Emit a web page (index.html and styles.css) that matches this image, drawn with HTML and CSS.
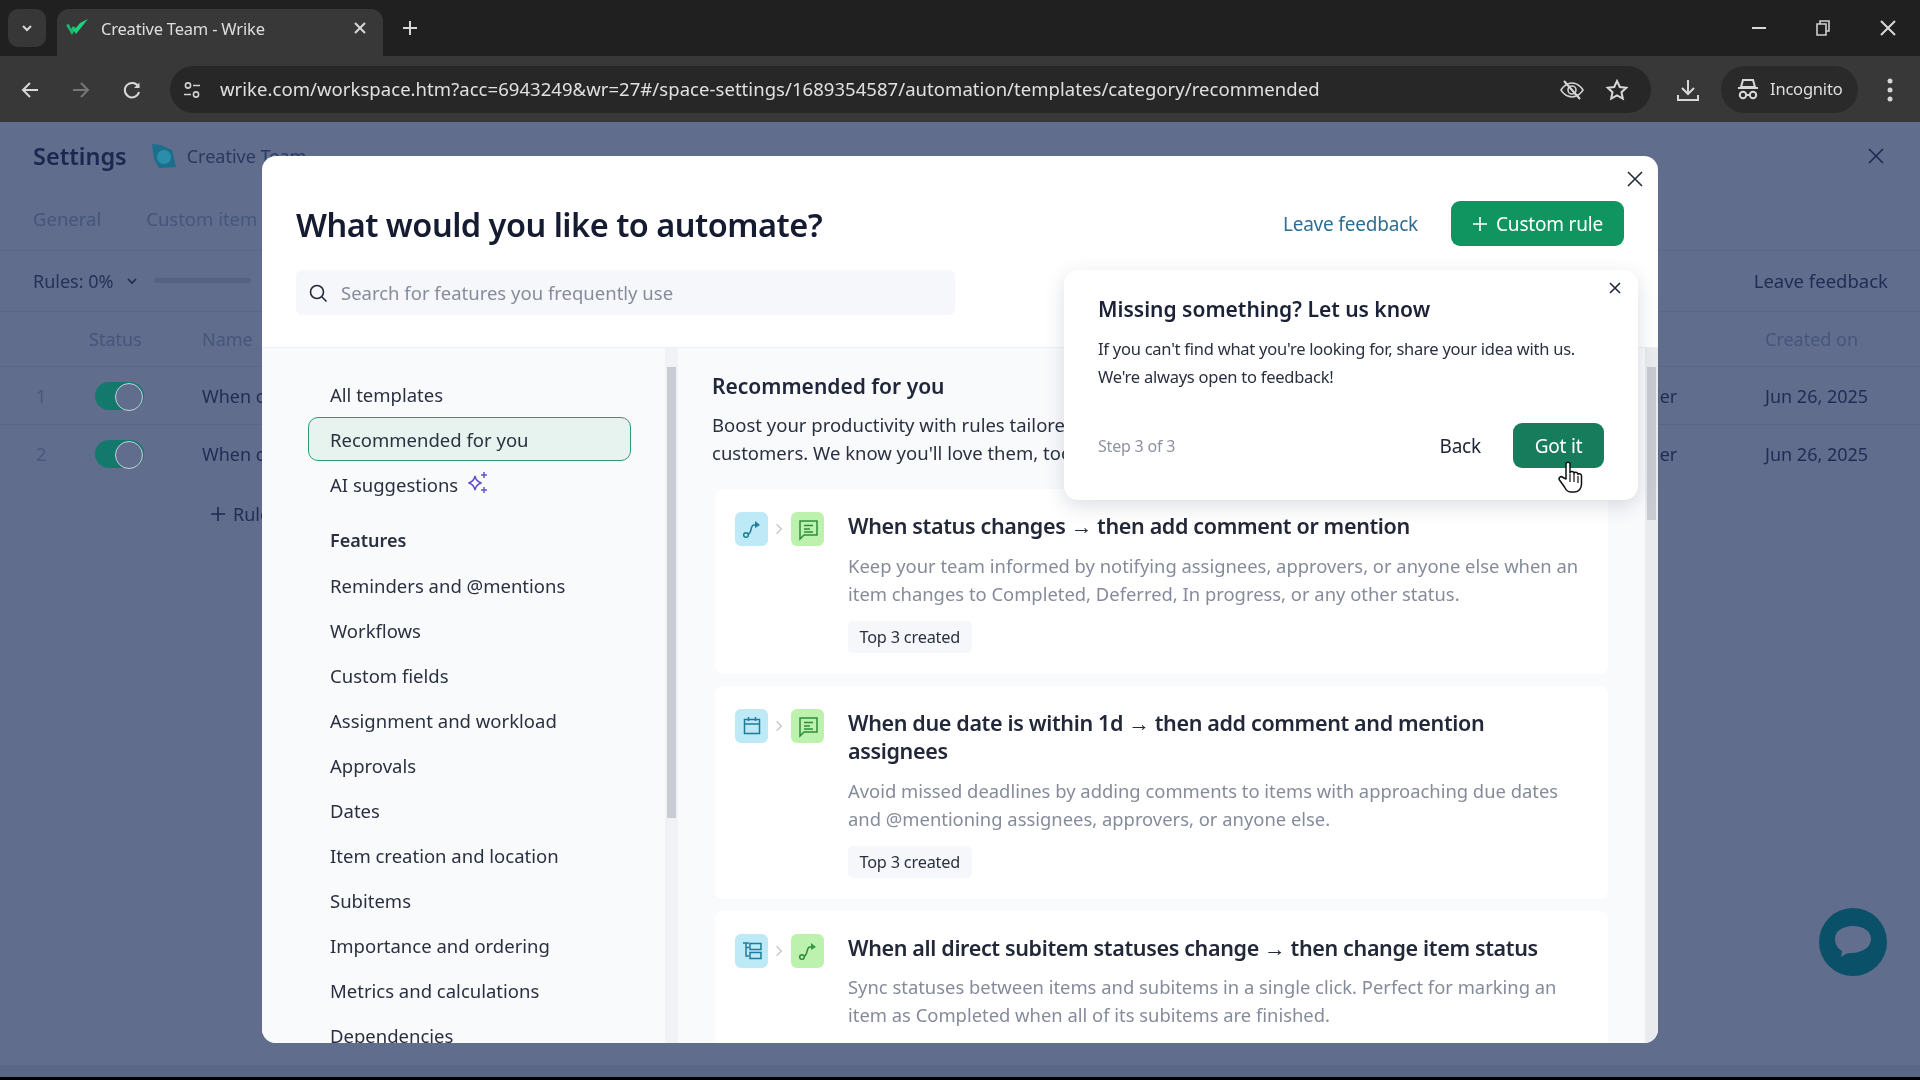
FILE: index.html
```html
<!DOCTYPE html>
<html lang="en">
<head>
<meta charset="utf-8">
<title>Creative Team - Wrike</title>
<link rel="stylesheet" href="styles.css">
</head>
<body>
<header class="tabstrip">
  <button class="tabs-menu"><svg width="14" height="14" viewBox="0 0 14 14"><path d="M3 5l4 4 4-4" class="ic-w2"/></svg></button>
  <div class="tab">
    <svg class="favicon" width="28" height="20" viewBox="0 0 28 20"><path d="M1 7l6 10 4-7-3-2-2 3-2-5z" fill="#19b96b"/><path d="M7 10l4 6 12-15-8 4-5 6z" fill="#1fd27c"/></svg>
    <span class="tab-title">Creative Team - Wrike</span>
    <svg class="tab-close" width="14" height="14" viewBox="0 0 14 14"><path d="M2 2l10 10M12 2L2 12" class="ic-w2"/></svg>
  </div>
  <svg class="newtab" width="16" height="16" viewBox="0 0 16 16"><path d="M8 1v14M1 8h14" class="ic-w2"/></svg>
  <div class="win-controls">
    <svg width="16" height="16" viewBox="0 0 16 16"><path d="M1 8h14" class="ic-w2"/></svg>
    <svg width="16" height="18" viewBox="0 0 16 18"><path d="M2 5h9v11H2zM5 5V2h9v10h-3" class="ic-w15"/></svg>
    <svg width="18" height="18" viewBox="0 0 18 18"><path d="M2 2l14 14M16 2L2 16" class="ic-w2"/></svg>
  </div>
</header>
<nav class="toolbar">
  <div class="nav-btns">
    <svg width="20" height="20" viewBox="0 0 20 20"><path d="M18 10H3M10 3l-7 7 7 7" class="ic-w2"/></svg>
    <svg width="20" height="20" viewBox="0 0 20 20"><path d="M2 10h15M10 3l7 7-7 7" class="ic-dim"/></svg>
    <svg width="20" height="20" viewBox="0 0 20 20"><path d="M16.5 7A7.2 7.2 0 1 0 17 12" class="ic-w2"/><path d="M17.5 2.5v5.5H12z" fill="#d6d6d6"/></svg>
  </div>
  <div class="omnibox">
    <svg class="site-ic" width="20" height="20" viewBox="0 0 20 20"><circle cx="6" cy="5.5" r="2.6" class="ic-w15"/><path d="M11 5.5h7M2 14.5h7" class="ic-w15"/><circle cx="14" cy="14.5" r="2.6" class="ic-w15"/></svg>
    <span class="url">wrike.com/workspace.htm?acc=6943249&amp;wr=27#/space-settings/1689354587/automation/templates/category/recommended</span>
    <svg class="omni-ic" width="26" height="24" viewBox="0 0 26 24"><path d="M2 12s4-7 11-7 11 7 11 7-4 7-11 7-11-7-11-7z" class="ic-w15"/><circle cx="13" cy="12" r="4" class="ic-w15"/><path d="M5 3l16 18" class="ic-w2"/></svg>
    <svg class="omni-ic" width="24" height="24" viewBox="0 0 24 24"><path d="M12 3l2.8 6 6.5.8-4.8 4.4 1.3 6.4-5.8-3.2-5.8 3.2 1.3-6.4-4.8-4.4 6.500-.8z" class="ic-w2"/></svg>
  </div>
  <svg class="dl-ic" width="24" height="24" viewBox="0 0 24 24"><path d="M12 2v14M6 10l6 6 6-6M2 17v5h20v-5" class="ic-w2"/></svg>
  <div class="incognito">
    <svg width="24" height="24" viewBox="0 0 24 24"><path d="M7 3h10l2 7H5zM2 11h20" class="ic-w2"/><circle cx="7" cy="18" r="3.200" class="ic-w2"/><circle cx="17" cy="18" r="3.200" class="ic-w2"/><path d="M10 18h4" class="ic-w2"/></svg>
    <span>Incognito</span>
  </div>
  <svg class="kebab" width="8" height="26" viewBox="0 0 8 26"><circle cx="4" cy="4" r="2.500" fill="#d6d6d6"/><circle cx="4" cy="13" r="2.500" fill="#d6d6d6"/><circle cx="4" cy="22" r="2.500" fill="#d6d6d6"/></svg>
</nav>

<main class="page">
  <div class="settings-head">
    <h1 class="settings-title">Settings</h1>
    <svg class="team-ic" width="26" height="26" viewBox="0 0 26 26"><path d="M1 1l9 1 11 5 4 17-17 1-5-9z" fill="#1c6f8c"/><circle cx="13" cy="14" r="7" fill="#2a8ea8"/></svg>
    <span class="team-name">Creative Team</span>
    <svg class="settings-close" width="18" height="18" viewBox="0 0 18 18"><path d="M2 2l14 14M16 2L2 16" class="ic-dark"/></svg>
  </div>
  <div class="settings-tabs"><span>General</span><span>Custom item</span></div>
  <div class="rules-bar">
    <span class="rules-label">Rules: 0%</span>
    <svg width="14" height="14" viewBox="0 0 14 14"><path d="M3 5l4 4 4-4" class="ic-dark"/></svg>
    <span class="rules-progress"></span>
    <span class="bg-feedback">Leave feedback</span>
  </div>
  <div class="grid-row grid-head"><span></span><span>Status</span><span>Name</span><span></span><span>Created on</span></div>
  <div class="grid-row grid-body"><span class="num">1</span><span class="toggle"></span><span class="dark">When c</span><span class="dark">ler</span><span class="dark">Jun 26, 2025</span></div>
  <div class="grid-row grid-body"><span class="num">2</span><span class="toggle"></span><span class="dark">When c</span><span class="dark">ler</span><span class="dark">Jun 26, 2025</span></div>
  <div class="add-rule"><svg width="16" height="16" viewBox="0 0 16 16"><path d="M8 1v14M1 8h14" class="ic-dark"/></svg><span>Rule</span></div>

  <section class="modal">
    <svg class="modal-close" width="18" height="18" viewBox="0 0 18 18"><path d="M2 2l14 14M16 2L2 16" class="ic-black"/></svg>
    <div class="modal-head">
      <div class="modal-title-row">
        <h2 class="modal-title">What would you like to automate?</h2>
        <a class="link">Leave feedback</a>
        <button class="btn-primary"><svg width="16" height="16" viewBox="0 0 16 16"><path d="M8 1v14M1 8h14" class="ic-white"/></svg>Custom rule</button>
      </div>
      <div class="search">
        <svg width="20" height="20" viewBox="0 0 20 20"><circle cx="9" cy="9" r="6.500" class="ic-black"/><path d="M14 14l4.500 4.500" class="ic-black"/></svg>
        <span>Search for features you frequently use</span>
      </div>
    </div>
    <div class="modal-body">
      <aside class="sidebar">
        <div class="side-item">All templates</div>
        <div class="side-item selected">Recommended for you</div>
        <div class="side-item">AI suggestions
          <svg class="sparkle" width="24" height="24" viewBox="0 0 24 24"><path d="M10 5c.8 4 2.500 6 6.500 7-4 1-5.700 3-6.500 7-.8-4-2.500-6-6.500-7 4-1 5.700-3 6.500-7z" class="ic-purple"/><path d="M19 1v6M16 4h6M19 16v6M16 19h6" class="ic-purple"/></svg>
        </div>
        <div class="side-heading">Features</div>
        <div class="side-item">Reminders and @mentions</div>
        <div class="side-item">Workflows</div>
        <div class="side-item">Custom fields</div>
        <div class="side-item">Assignment and workload</div>
        <div class="side-item">Approvals</div>
        <div class="side-item">Dates</div>
        <div class="side-item">Item creation and location</div>
        <div class="side-item">Subitems</div>
        <div class="side-item">Importance and ordering</div>
        <div class="side-item">Metrics and calculations</div>
        <div class="side-item">Dependencies</div>
      </aside>
      <div class="scroll scroll-side"><span class="thumb thumb-side"></span></div>
      <div class="content">
        <h3 class="content-title">Recommended for you</h3>
        <p class="content-desc">Boost your productivity with rules tailored to you, based on what works for similar<br>customers. We know you'll love them, too</p>
        <article class="card">
          <div class="tiles">
            <span class="tile blue"><svg width="22" height="22" viewBox="0 0 22 22"><circle cx="5" cy="17" r="2.300" class="ic-blue"/><path d="M7 16c4 0 2-9 6-9h2" class="ic-blue"/><path d="M14 3l5 4-5 3z" fill="#1f7d99"/></svg></span>
            <svg class="chev" width="10" height="16" viewBox="0 0 10 16"><path d="M2 2l6 6-6 6" class="ic-gray"/></svg>
            <span class="tile green"><svg width="24" height="24" viewBox="0 0 24 24"><path d="M4 4h17v14H8l-4 4z" class="ic-green"/><path d="M8 8.500h9M8 12h6M8 15h9" class="ic-green"/></svg></span>
          </div>
          <div class="card-text">
            <h4>When status changes → then add comment or mention</h4>
            <p>Keep your team informed by notifying assignees, approvers, or anyone else when an<br>item changes to Completed, Deferred, In progress, or any other status.</p>
            <span class="chip">Top 3 created</span>
          </div>
        </article>
        <article class="card">
          <div class="tiles">
            <span class="tile blue"><svg width="22" height="22" viewBox="0 0 22 22"><path d="M3.500 4.500h15v14h-15zM3.500 9h15M7.500 2v4M14.500 2v4" class="ic-blue"/></svg></span>
            <svg class="chev" width="10" height="16" viewBox="0 0 10 16"><path d="M2 2l6 6-6 6" class="ic-gray"/></svg>
            <span class="tile green"><svg width="24" height="24" viewBox="0 0 24 24"><path d="M4 4h17v14H8l-4 4z" class="ic-green"/><path d="M8 8.500h9M8 12h6M8 15h9" class="ic-green"/></svg></span>
          </div>
          <div class="card-text">
            <h4>When due date is within 1d → then add comment and mention<br>assignees</h4>
            <p>Avoid missed deadlines by adding comments to items with approaching due dates<br>and @mentioning assignees, approvers, or anyone else.</p>
            <span class="chip">Top 3 created</span>
          </div>
        </article>
        <article class="card">
          <div class="tiles">
            <span class="tile blue"><svg width="22" height="22" viewBox="0 0 22 22"><path d="M2 3h6M5 3v13h3M5 7.500h3M9 3.500h11v6H9zM9 12.500h11v6H9z" class="ic-blue"/></svg></span>
            <svg class="chev" width="10" height="16" viewBox="0 0 10 16"><path d="M2 2l6 6-6 6" class="ic-gray"/></svg>
            <span class="tile green"><svg width="22" height="22" viewBox="0 0 22 22"><circle cx="5" cy="17" r="2.300" class="ic-green"/><path d="M7 16c4 0 2-9 6-9h2" class="ic-green"/><path d="M14 3l5 4-5 3z" fill="#2f9a3f"/></svg></span>
          </div>
          <div class="card-text">
            <h4>When all direct subitem statuses change → then change item status</h4>
            <p>Sync statuses between items and subitems in a single click. Perfect for marking an<br>item as Completed when all of its subitems are finished.</p>
          </div>
        </article>
      </div>
      <div class="scroll scroll-main"><span class="thumb thumb-main"></span></div>
    </div>
    <div class="popover">
      <svg class="pop-close" width="14" height="14" viewBox="0 0 14 14"><path d="M2 2l10 10M12 2L2 12" class="ic-black"/></svg>
      <h4 class="pop-title">Missing something? Let us know</h4>
      <p class="pop-text">If you can't find what you're looking for, share your idea with us.<br>We're always open to feedback!</p>
      <div class="pop-foot">
        <span class="pop-step">Step 3 of 3</span>
        <span class="pop-back">Back</span>
        <button class="btn-got">Got it</button>
      </div>
    </div>
  </section>

  <svg class="cursor" width="26" height="34" viewBox="0 0 26 34"><path d="M8 3c0-2.500 4-2.500 4 0v9c0-2 4-2 4 .5 0-2 4-1.500 4 1 0-1.500 3.500-1 3.500 1.500v8c0 4-2.500 8-7 8h-4c-3 0-4.500-2-6-5l-5-7c-1.500-2.500 1.500-4.500 3.500-2.500L8 18z" fill="#fff" stroke="#111" stroke-width="1.500" stroke-linejoin="round"/><path d="M12 13v8M16 13v8M20 15v7" stroke="#111" stroke-width="1.200" fill="none"/></svg>
  <div class="chat"><svg width="40" height="36" viewBox="0 0 40 36"><path d="M20 2c10 0 18 5 18 13s-8 13-18 14c-3 0-5 0-7 1l-5 3 1-6C5 25 2 20 2 15 2 7 10 2 20 2z" fill="#626e8d"/></svg></div>
</main>
<div class="bottom-strip"></div>
</body>
</html>
```
FILE: styles.css
```css
* { box-sizing: border-box; }
html, body { margin: 0; height: 100%; }
body {
  width: 1920px; height: 1080px; overflow: hidden;
  display: flex; flex-direction: column;
  font-family: "Noto Sans", "Open Sans", sans-serif;
  background: #000; color: #1b2238;
  filter: blur(.35px);
}
h1, h2, h3, h4, p { margin: 0; }
button { font-family: inherit; border: 0; }
svg { display: block; flex: none; }

.ic-w2 { fill: none; stroke: #d8d8d8; stroke-width: 2; }
.ic-w15 { fill: none; stroke: #d0d0d0; stroke-width: 1.6; }
.ic-dim { fill: none; stroke: #777; stroke-width: 2; }
.ic-dark { fill: none; stroke: #1c2a52; stroke-width: 1.6; }
.ic-black { fill: none; stroke: #222a3a; stroke-width: 1.6; }
.ic-white { fill: none; stroke: #fff; stroke-width: 1.6; }
.ic-purple { fill: none; stroke: #6650c4; stroke-width: 1.5; }
.ic-blue { fill: none; stroke: #1f7d99; stroke-width: 1.5; }
.ic-green { fill: none; stroke: #2f8a3a; stroke-width: 1.5; }
.ic-gray { fill: none; stroke: #c3c6ce; stroke-width: 1.6; }

/* browser chrome */
.tabstrip { height: 56px; flex: none; background: #202020; display: flex; align-items: flex-end; padding-left: 8px; }
.tabs-menu { width: 38px; height: 38px; align-self: flex-start; margin-top: 9px; background: #373737; border-radius: 10px; display: flex; align-items: center; justify-content: center; padding: 0; }
.tab { width: 326px; height: 47px; margin-left: 11px; background: #383838; border-radius: 12px 12px 0 0; display: flex; align-items: center; padding: 0 16px 9px 8px; }
.favicon { margin-right: 8px; }
.tab-title { font-size: 16.500px; color: #dedede; flex: 1; letter-spacing: -.2px; }
.newtab { margin: 0 0 20px 19px; }
.win-controls { margin-left: auto; width: 169px; height: 56px; display: flex; align-items: center; justify-content: space-between; padding-right: 23px; padding-bottom: 1px; }
.toolbar { height: 66px; flex: none; background: #383838; display: flex; align-items: center; padding-top: 1px; }
.nav-btns { width: 170px; display: flex; gap: 31px; padding-left: 20px; }
.omnibox { width: 1481px; height: 47px; background: #272727; border-radius: 24px; display: flex; align-items: center; padding: 0 22px 0 12px; }
.site-ic { margin-right: 18px; }
.url { flex: 1; font-size: 18.500px; color: #e0e0e0; white-space: nowrap; letter-spacing: .05px; padding-bottom: 2px; }
.omni-ic { margin-left: 20px; }
.dl-ic { margin-left: 25px; }
.incognito { width: 137px; height: 47px; margin-left: 21px; border-radius: 24px; background: #2a2a2a; display: flex; align-items: center; gap: 10px; padding: 0 0 2px 15px; font-size: 16.500px; color: #dedede; letter-spacing: -.2px; }
.kebab { margin-left: 28px; }

/* dimmed settings page */
.page { flex: 1; position: relative; background: #616d8c; color: #1c2a52; font-size: 18px; min-height: 0; border-bottom: 12px solid #5a6685; }
.settings-head { height: 68px; display: flex; align-items: center; padding: 0 32px 0 33px; }
.settings-title { font-size: 23.500px; font-weight: 600; color: #1a2750; }
.team-ic { margin-left: 24px; }
.team-name { margin-left: 10px; color: #2a3960; }
.settings-close { margin-left: auto; margin-right: 3px; }
.settings-tabs { height: 61px; display: flex; gap: 45px; align-items: center; padding: 0 33px 4px; font-size: 18.500px; color: #46557c; border-bottom: 1px solid #5a6685; }
.rules-bar { height: 61px; display: flex; align-items: center; padding: 0 32px 1px 33px; border-bottom: 1px solid #5a6685; color: #243259; }
.rules-bar svg { margin-left: 11px; }
.rules-progress { width: 97px; height: 5px; background: #566284; border-radius: 3px; margin-left: 15px; }
.bg-feedback { margin-left: auto; font-size: 18.500px; color: #1f2d55; }
.grid-row { display: grid; grid-template-columns: 53px 113px 1fr 110px 123px; align-items: center; padding: 0 32px 0 36px; border-bottom: 1px solid #5a6685; }
.grid-head { height: 55px; color: #46557c; }
.grid-body { height: 58px; }
.grid-body + .grid-body { border-bottom: 0; }
.num { color: #49587e; }
.dark { color: #1f2d55; }
.toggle { width: 49px; height: 28px; margin-left: 6px; border-radius: 14px; background: #13796d; position: relative; }
.toggle::after { content: ""; position: absolute; right: 1px; top: 1px; width: 26px; height: 26px; border-radius: 50%; background: #616d8c; border: 1px solid #c9cedb; }
.add-rule { display: flex; align-items: center; gap: 7px; padding: 19px 0 0 210px; color: #1f2d55; }

/* modal */
.modal { position: absolute; left: 262px; top: 34px; width: 1396px; height: 887px; background: #fff; border-radius: 14px; overflow: hidden; display: flex; flex-direction: column; color: #1b2238; }
.modal-close { position: absolute; right: 14px; top: 14px; }
.modal-head { height: 192px; flex: none; padding: 45px 34px 0 34px; border-bottom: 1px solid #eef0f4; }
.modal-title-row { display: flex; align-items: center; height: 45px; }
.modal-title { font-size: 32.500px; font-weight: 600; flex: 1; letter-spacing: -.5px; color: #151b30; padding-top: 2px; }
.link { color: #2f6d93; font-size: 19px; margin-right: 33px; letter-spacing: -.2px; }
.btn-primary { width: 173px; height: 45px; border-radius: 9px; background: #109560; color: #fff; font-size: 19px; display: flex; align-items: center; justify-content: center; gap: 8px; padding: 0; letter-spacing: -.2px; }
.search { width: 659px; height: 45px; margin-top: 24px; background: #f6f7fa; border-radius: 6px; display: flex; align-items: center; gap: 13px; padding-left: 12px; font-size: 18.500px; color: #868c9c; }
.modal-body { flex: 1; min-height: 0; display: flex; background: #f9fafc; }

.sidebar { width: 403px; flex: none; padding: 24px 34px 0 46px; display: flex; flex-direction: column; gap: 1px; font-size: 18.500px; color: #2a3040; overflow: hidden; }
.side-item { height: 44px; flex: none; display: flex; align-items: center; padding: 1px 0 0 21px; border: 1px solid transparent; border-radius: 10px; }
.side-item.selected { background: #e6f3ee; border-color: #2b9c74; }
.side-heading { height: 44px; flex: none; display: flex; align-items: center; padding-left: 22px; margin: 11px 0 0; font-size: 18px; font-weight: 600; }
.sparkle { margin: -4px 0 0 7px; }

.scroll { flex: none; background: #f1f2f5; position: relative; }
.scroll-side { width: 13px; margin-right: 2px; }
.scroll-main { width: 13px; margin-left: auto; background: #e9ebef; }
.thumb { position: absolute; left: 2px; width: 9px; background: #c8cbd2; }
.thumb-side { top: 19px; height: 451px; }
.thumb-main { top: 19px; height: 153px; }

.content { width: 931px; flex: none; padding: 24px 0 0 32px; }
.content-title { font-size: 21px; line-height: 28px; font-weight: 600; color: #20273b; }
.content-desc { margin-top: 11px; font-size: 18.500px; line-height: 28px; color: #2a3040; white-space: nowrap; }
.card { margin: 12px 0 0 3px; background: #fff; border-radius: 8px; padding: 23px 20px 21px 20px; display: flex; gap: 24px; width: 893px; }
.content-desc + .card { margin-top: 22px; }
.tiles { display: flex; align-items: center; height: 34px; flex: none; }
.tile { width: 33px; height: 34px; border-radius: 6px; display: flex; align-items: center; justify-content: center; }
.tile.blue { background: #bee9f6; }
.tile.green { background: #bdf2ae; }
.chev { margin: 0 7px 0 6px; transform: scale(.8); }
.card-text { flex: 1; min-width: 0; }
.card-text h4 { font-size: 21.500px; line-height: 28.500px; font-weight: 600; color: #232838; letter-spacing: -.35px; white-space: nowrap; }
.card-text p { margin-top: 11px; font-size: 18.400px; line-height: 28px; color: #858b9a; white-space: nowrap; }
.chip { display: inline-block; height: 32px; line-height: 32px; margin-top: 13px; padding: 0 11.500px; background: #f6f7fa; border-radius: 5px; font-size: 16.300px; color: #2a3040; letter-spacing: -.2px; }

/* popover */
.popover { position: absolute; left: 802px; top: 114px; width: 574px; height: 230px; background: #fff; border-radius: 14px; box-shadow: 0 6px 20px rgba(40, 50, 80, .16); padding: 23px 34px 0 34px; }
.pop-close { position: absolute; right: 16px; top: 11px; }
.pop-title { font-size: 21px; line-height: 32px; font-weight: 600; color: #1b2238; }
.pop-text { margin-top: 10px; font-size: 16.500px; line-height: 28px; color: #2a3040; letter-spacing: -.25px; white-space: nowrap; }
.pop-foot { display: flex; align-items: center; margin-top: 32px; height: 45px; }
.pop-step { font-size: 16px; color: #8d92a0; flex: 1; letter-spacing: -.2px; }
.pop-back { font-size: 19px; margin-right: 32px; color: #232838; letter-spacing: -.2px; }
.btn-got { width: 91px; height: 45px; border-radius: 9px; background: #177c5b; color: #fff; font-size: 19px; padding: 0; letter-spacing: -.2px; }

.cursor { position: absolute; left: 1558px; top: 339px; }
.chat { position: absolute; left: 1819px; top: 786px; width: 68px; height: 68px; border-radius: 50%; background: #0a5069; display: flex; align-items: center; justify-content: center; }
.bottom-strip { height: 3px; flex: none; background: #000; }
```
